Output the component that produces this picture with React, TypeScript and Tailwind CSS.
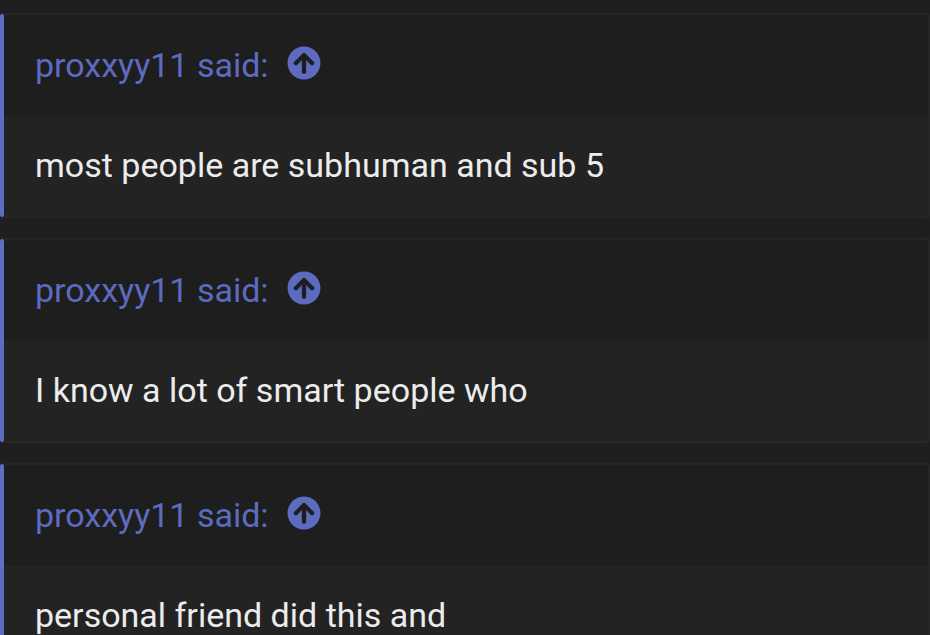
import { FaArrowCircleUp } from "react-icons/fa";

type QuoteProps = { author: string; text: string };

const quotes: QuoteProps[] = [
  { author: "proxxyy11", text: "most people are subhuman and sub 5" },
  { author: "proxxyy11", text: "I know a lot of smart people who" },
  { author: "proxxyy11", text: "personal friend did this and" },
];

function Quote({ author, text }: QuoteProps) {
  return (
    <blockquote className="shrink-0 rounded-sm border-2 border-l-4 border-[#262626] border-l-[#5f6dc4] bg-[#232323]">
      <div className="bg-[#1e1e1e] px-[31px] pt-[25px] pb-[26px]">
        <a href="#post" className="flex items-center gap-[18px] text-[#5c6bc0]">
          <span>{author} said:</span>
          <FaArrowCircleUp className="mb-1 size-[34px]" aria-hidden="true" />
        </a>
      </div>
      <p className="px-[31px] pt-6 pb-[26px] text-[#ececec]">{text}</p>
    </blockquote>
  );
}

export default function App() {
  return (
    <main className="flex h-screen flex-col gap-5 overflow-hidden bg-[#1f1f1f] pt-[13px] font-[Roboto,sans-serif] text-[34px] leading-[50px]">
      {quotes.map((quote) => (
        <Quote key={quote.text} {...quote} />
      ))}
    </main>
  );
}
